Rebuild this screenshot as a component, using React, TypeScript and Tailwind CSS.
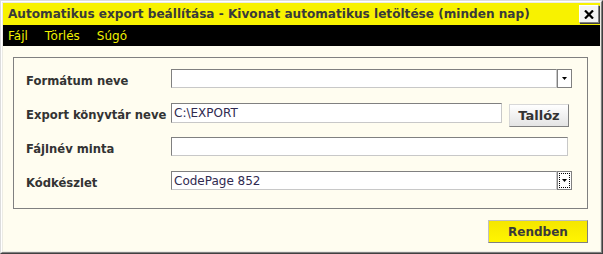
import React from 'react'

function DropButton({ focused = false }: { focused?: boolean }) {
  return (
    <div className="flex h-[19px] w-[15px] shrink-0 items-center justify-center border border-[#808080] bg-white">
      <div
        className={
          focused
            ? 'flex h-[15px] w-[11px] items-center justify-center border border-dotted border-black'
            : 'flex h-[15px] w-[11px] items-center justify-center'
        }
      >
        <svg width="5" height="3" viewBox="0 0 5 3">
          <path d="M0 0 H5 L2.5 3 Z" fill="#000" />
        </svg>
      </div>
    </div>
  )
}

function Row({ label, children }: { label: string; children: React.ReactNode }) {
  return (
    <div className="flex h-[20px] items-start">
      <div className="w-[145px] shrink-0 self-center pt-[5px] text-[11.6px] font-bold text-[#333]">{label}</div>
      <div className="flex items-start">{children}</div>
    </div>
  )
}

export default function App() {
  return (
    <div className="h-[254px] w-[603px] border border-t-[#dcdcdc] border-l-[#dcdcdc] border-r-[#404040] border-b-[#404040] font-['DejaVu_Sans',sans-serif]">
      <div className="flex h-full w-full flex-col border border-t-white border-l-white border-r-[#808080] border-b-[#808080] bg-[#ecebe4] p-[1px]">
        <div className="flex h-[22px] shrink-0 items-center justify-between bg-[#f8f200] pl-[5px] pr-[1px]">
          <span className="text-[12.1px] font-bold text-[#3a3a3a]">
            Automatikus export beállítása - Kivonat automatikus letöltése (minden nap)
          </span>
          <div className="flex h-[18px] w-[20px] items-center justify-center border border-t-white border-l-white border-r-[#808080] border-b-[#808080] bg-[#f4f4f4] shadow-[1px_1px_0_#404040]">
            <svg width="10" height="9" viewBox="0 0 10 9">
              <path d="M1 0.5 L9 8.5 M9 0.5 L1 8.5" stroke="#000" strokeWidth="2.2" />
            </svg>
          </div>
        </div>
        <div className="flex h-[21px] shrink-0 items-center gap-[17px] bg-black pl-[5px] text-[12px] text-[#f0f000]">
          <span>Fájl</span>
          <span>Törlés</span>
          <span>Súgó</span>
        </div>
        <div className="flex flex-1 flex-col bg-[#fffdf0] pl-[10px] pr-[12px] pt-[11px]">
          <div className="flex flex-col gap-[14px] border border-[#808080] pb-[17px] pl-[12px] pt-[11px]">
            <Row label="Formátum neve">
              <div className="flex">
                <div className="h-[19px] w-[386px] border border-t-[#808080] border-l-[#808080] border-r-[#c8c8c8] border-b-[#c8c8c8] bg-white" />
                <DropButton />
              </div>
            </Row>
            <Row label="Export könyvtár neve">
              <div className="flex h-[20px] w-[331px] items-center border border-t-[#808080] border-l-[#808080] border-r-[#c8c8c8] border-b-[#c8c8c8] bg-white pl-[2px] text-[12px] text-[#302a50]">
                C:\EXPORT
              </div>
              <button className="ml-[7px] mt-[1px] flex h-[23px] w-[60px] items-center justify-center border border-t-[#d8d8d8] border-l-[#d8d8d8] border-r-[#808080] border-b-[#808080] bg-gradient-to-b from-white to-[#e4e4e4] text-[13px] font-bold text-[#333]">
                Tallóz
              </button>
            </Row>
            <Row label="Fájlnév minta">
              <div className="h-[19px] w-[397px] border border-t-[#808080] border-l-[#808080] border-r-[#c8c8c8] border-b-[#c8c8c8] bg-white" />
            </Row>
            <Row label="Kódkészlet">
              <div className="flex">
                <div className="flex h-[19px] w-[386px] items-center border border-t-[#808080] border-l-[#808080] border-r-[#c8c8c8] border-b-[#c8c8c8] bg-white pl-[2px] text-[12px] text-[#302a50]">
                  CodePage 852
                </div>
                <DropButton focused />
              </div>
            </Row>
          </div>
          <div className="flex justify-end pt-[11px]">
            <button className="flex h-[23px] w-[100px] items-center justify-center border border-t-[#c0c0c0] border-l-[#c0c0c0] border-r-[#808080] border-b-[#808080] bg-gradient-to-b from-[#f5e600] to-[#fff500] text-[12px] font-bold text-[#3a3a3a]">
              Rendben
            </button>
          </div>
        </div>
      </div>
    </div>
  )
}
